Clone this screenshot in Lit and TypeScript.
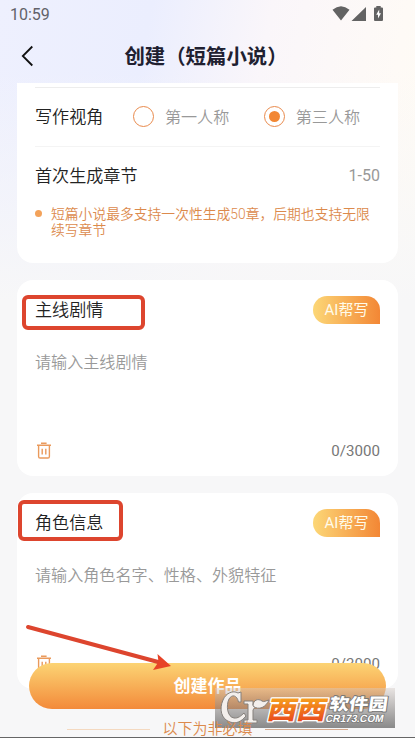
import { LitElement, html, css } from "lit";
import { customElement, property } from "lit/decorators.js";

const trash = html`<svg width="16" height="18" viewBox="0 0 16 18" fill="none" stroke="#ea9a5c" stroke-width="1.4">
  <path d="M1 3.2H15M5 1.2H10.6M2.6 3.6V14.4Q2.6 16 4.1 16H11.9Q13.4 16 13.4 14.4V3.6M6.2 6.8V12.6M9.8 6.8V12.6" /></svg>`;

@customElement("prompt-card")
class PromptCard extends LitElement {
  @property() heading = "";
  @property() hint = "";
  static styles = css`
    :host { display: flex; flex-direction: column; box-sizing: border-box; height: 196px; margin: 0 17px 17px; padding: 16px 18px 15px; background: #fff; border-radius: 16px; }
    .top, .foot { display: flex; justify-content: space-between; }
    .top { height: 28px; }
    .heading { font-size: 17.1px; line-height: 28px; color: #222; }
    .ai { width: 67px; height: 28px; border-radius: 14px 14px 0 14px; background: linear-gradient(90deg, #fcd777, #f38735); color: #fffbe9; font-size: 15px; font-weight: 400; line-height: 28px; text-align: center; }
    .hint { flex: 1; margin-top: 26px; font-size: 16.1px; line-height: 26px; color: #999; }
    .foot { height: 20px; align-items: center; font-size: 15.1px; font-weight: 400; color: #777; }
    svg { margin-left: 1px; }
  `;
  render() {
    return html`<div class="top"><span class="heading">${this.heading}</span><span class="ai">AI帮写</span></div>
      <div class="hint">${this.hint}</div>
      <div class="foot">${trash}<span>0/3000</span></div>`;
  }
}

@customElement("site-badge")
class SiteBadge extends LitElement {
  static styles = css`
    :host { display: block; width: 180px; height: 40px; background: linear-gradient(rgba(215,205,200,.45), rgba(95,95,95,.72)); }
    svg { display: block; overflow: visible; }
    text { font-family: "Noto Sans CJK SC", sans-serif; font-weight: 900; paint-order: stroke; stroke-linejoin: round; }
    .latin { font-family: "Liberation Sans", sans-serif; font-weight: 700; }
  `;
  render() {
    return html`<svg width="180" height="40" viewBox="0 0 180 40">
      <defs><linearGradient id="warm" x1="0" y1="0" x2="0" y2="1"><stop offset="0.1" stop-color="#f9b41e" /><stop offset="1" stop-color="#e63b1b" /></linearGradient></defs>
      <g fill="#f3efec" stroke="#85807c" stroke-width="1" stroke-linejoin="round">
        <path d="M26 4V14H23.5C22 7 17 6 14 11C11 17 12 29 19 30C23 30.5 26 28 29 25L31 28C26 34 21 36 15 34C6 31 4 21 8 12C11 5 18 2 23 5Z" />
        <path d="M29 13H38V17Q41 14 43 13V18Q39 19 38 22V32H42V35H29V32H33V16H29Z" />
        <path d="M38 18C38 12 43 10 47 13C49 14.5 51 12.5 54 12C51 19 44 23 38 18Z" />
      </g>
      <g transform="translate(51 30.5) skewX(-13)"><text font-size="25.5" textLength="59" lengthAdjust="spacingAndGlyphs" fill="url(#warm)" stroke="#fff" stroke-width="2.4">西西</text></g>
      <g transform="translate(114 22) skewX(-8)"><text font-size="16.5" textLength="58" lengthAdjust="spacingAndGlyphs" fill="#fff" stroke="#777" stroke-width="1.8">软件园</text></g>
      <g transform="translate(110 34) skewX(-12)"><text class="latin" font-size="10.5" textLength="58" lengthAdjust="spacingAndGlyphs" fill="#fff" stroke="#777" stroke-width="1.5">CR173.COM</text></g>
    </svg>`;
  }
}

@customElement("app-root")
class AppRoot extends LitElement {
  static styles = css`
    :host { display: block; position: relative; width: 415px; height: 738px; overflow: hidden; font-family: Roboto, "Noto Sans CJK SC", sans-serif; font-weight: 350;
      background: linear-gradient(180deg, rgba(247,247,248,0) 70px, #f7f7f8 300px), linear-gradient(100deg, #eef0fe 0, #ebeefe 28%, #faf6fa 50%, #fefaf6 75%, #fffef2 100%); }
    .status { display: flex; justify-content: space-between; height: 28px; box-sizing: border-box; padding: 0 30px 0 10px; font-size: 16px; font-weight: 400; line-height: 29px; color: #626269; }
    .nav { display: flex; align-items: center; height: 55px; }
    .back { margin-left: 20px; width: 16px; }
    h1 { flex: 1; margin: 3px 39px 0 0; text-align: center; font-size: 20.4px; font-weight: 700; line-height: 55px; color: #202030; }
    .options { height: 180px; box-sizing: border-box; margin: 0 17px 17px; padding: 4px 18px 0; background: #fff; border-radius: 0 0 16px 16px; }
    .row { display: flex; align-items: center; box-sizing: border-box; border-top: 1px solid #ededed; height: 59px; padding-bottom: 2px; font-size: 17.1px; color: #222; }
    .row > .label { margin-top: -2px; }
    .row + .row { border-color: #f4f4f4; }
    .radio { display: flex; align-items: center; gap: 10.5px; font-size: 16.1px; color: #999; }
    .first { margin-left: 30px; } .third { margin-left: 35px; }
    .ring { display: grid; place-items: center; box-sizing: border-box; width: 21px; height: 21px; border: 1.8px solid #e98a4c; border-radius: 50%; }
    .ring i { width: 11px; height: 11px; border-radius: 50%; background: #f28734; }
    .range { margin-left: auto; font-size: 16px; font-weight: 400; color: #999; }
    .note { display: flex; font-size: 13.8px; font-weight: 350; line-height: 16px; color: #dc8a4c; margin-top: 1px; }
    .note i { flex: none; width: 7px; height: 7px; margin: 4px 9px 0 0; border-radius: 50%; background: #f3a25a; }
    .more { position: relative; z-index: 1; display: flex; align-items: center; justify-content: center; gap: 12px; margin-top: 29px; font-size: 15px; line-height: 22px; color: #dc8a4c; }
    .more i { width: 83px; height: 1px; background: #f4d9c0; }
    .more i:last-child { background: #d6a98c; }
    .submit { position: absolute; left: 29px; top: 663px; width: 357px; height: 46px; border-radius: 23px; background: linear-gradient(#fcd474, #f38a3a); color: #fff; font-size: 17px; font-weight: 700; line-height: 47px; text-align: center; }
    .mark { position: absolute; box-sizing: border-box; border: 4px solid #dd452e; border-radius: 6px; }
    .m1 { left: 22px; top: 295px; width: 123px; height: 35px; }
    .m2 { left: 18px; top: 500px; width: 105px; height: 41px; }
    .arrow { position: absolute; left: 20px; top: 618px; }
    site-badge { position: absolute; left: 215px; top: 688px; }
    .edge { position: absolute; left: 0; top: 737px; width: 415px; height: 1px; background: #666; }
  `;
  render() {
    return html`
      <div class="status"><span>10:59</span>
        <svg width="54" height="28" viewBox="331 0 54 28" fill="#636363"><path d="M332.5 9.8Q341 2.6 349.5 9.8L341 20.5ZM366 7V21H351.5ZM376.3 6H380.7V7.5H382Q383 7.5 383 8.5V20Q383 21 382 21H375Q374 21 374 20V8.5Q374 7.5 375 7.5H376.3Z" /><path fill="#fff" d="M379.2 9.5L376.2 14.7H378V18.5L381 13.2H379.2Z" /></svg>
      </div>
      <div class="nav"><svg class="back" height="22" viewBox="0 0 16 22" fill="none" stroke="#111" stroke-width="1.8"><path d="M12.3 1.5L2.8 11L12.3 20.5" /></svg><h1>创建（短篇小说）</h1></div>
      <div class="options">
        <div class="row"><span class="label">写作视角</span><span class="radio first"><span class="ring"></span>第一人称</span><span class="radio third"><span class="ring"><i></i></span>第三人称</span></div>
        <div class="row"><span class="label">首次生成章节</span><span class="range">1-50</span></div>
        <div class="note"><i></i><span>短篇小说最多支持一次性生成50章，后期也支持无限续写章节</span></div>
      </div>
      <prompt-card heading="主线剧情" hint="请输入主线剧情"></prompt-card>
      <prompt-card heading="角色信息" hint="请输入角色名字、性格、外貌特征"></prompt-card>
      <div class="more"><i></i><span>以下为非必填</span><i></i></div>
      <div class="submit">创建作品</div>
      <div class="mark m1"></div><div class="mark m2"></div>
      <svg class="arrow" width="156" height="56" viewBox="20 618 156 56"><path d="M28 627L160 662.5" fill="none" stroke="#dd452e" stroke-width="4" stroke-linecap="round" /><path fill="#e74327" d="M171 666L157.5 654L158.5 662L153 670Z" /></svg>
      <site-badge></site-badge>
      <div class="edge"></div>`;
  }
}
